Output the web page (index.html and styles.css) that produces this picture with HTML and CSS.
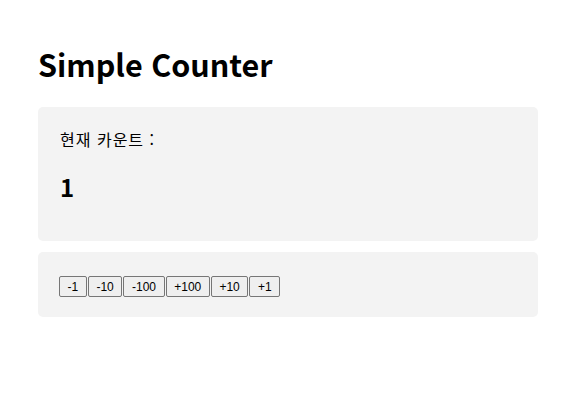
FILE: index.html
```html
<!DOCTYPE html>
<html lang="ko">
<head>
<meta charset="utf-8">
<title>Simple Counter</title>
<link rel="stylesheet" href="styles.css">
</head>
<body>
<main class="app">
  <h1 class="title">Simple Counter</h1>
  <section class="card card-view">
    <div class="label">현재 카운트 :</div>
    <div class="count">1</div>
  </section>
  <section class="card card-controls">
    <div class="buttons">
      <button class="btn">-1</button>
      <button class="btn">-10</button>
      <button class="btn">-100</button>
      <button class="btn">+100</button>
      <button class="btn">+10</button>
      <button class="btn">+1</button>
    </div>
  </section>
</main>
</body>
</html>
```

FILE: styles.css
```css
html, body {
  margin: 0;
  padding: 0;
  background: #ffffff;
}
body {
  font-family: "Noto Sans CJK KR", "Noto Sans", sans-serif;
  color: #000;
}
.app {
  width: 500px;
  padding: 38px 0 0 38px;
  display: flex;
  flex-direction: column;
}
.title {
  margin: 0 0 17px 0;
  font-size: 30.5px;
  font-weight: 700;
  line-height: 52px;
  height: 52px;
}
.card {
  background: #f3f3f3;
  border-radius: 5px;
}
.card-view {
  height: 134px;
  box-sizing: border-box;
  padding: 20px 22px;
}
.label {
  font-size: 16px;
  line-height: 24px;
  letter-spacing: 1px;
}
.count {
  margin-top: 20px;
  font-size: 24px;
  font-weight: 700;
  line-height: 32px;
}
.card-controls {
  margin-top: 11px;
  height: 65px;
  box-sizing: border-box;
  padding: 24px 21px 0;
}
.buttons {
  display: flex;
  gap: 1px;
}
.btn {
  font-family: "Liberation Sans", Arial, sans-serif;
  font-size: 12px;
  height: 21px;
  padding: 0 7.6px;
  margin: 0;
  border: 1px solid #767676;
  border-radius: 2px;
  background: #efefef;
  color: #000;
}
```
